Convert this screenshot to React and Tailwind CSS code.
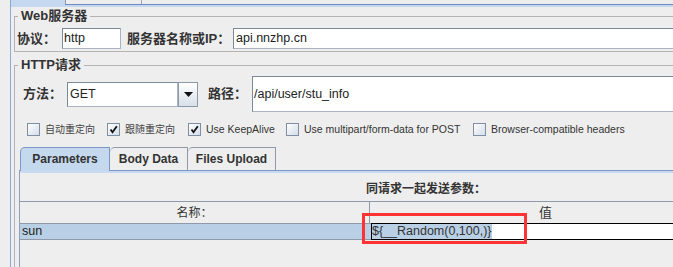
const FONT = "font-['Liberation_Sans','Noto_Sans_CJK_SC',sans-serif]"

function Field({ className = '', children }) {
  return (
    <div
      className={`bg-white border border-t-[#7a8a99] border-l-[#7a8a99] border-b-[#a9b4c0] border-r-[#a9b4c0] text-[12.5px] text-[#222] flex items-center whitespace-nowrap overflow-hidden ${className}`}
    >
      {children}
    </div>
  )
}

function Check({ checked }) {
  return (
    <div className="w-[13px] h-[13px] shrink-0 border border-[#7f8fa3] bg-linear-to-br from-white to-[#d3dde9] flex items-center justify-center">
      {checked && (
        <svg width="9" height="9" viewBox="0 0 9 9">
          <path d="M1.5 4.5 L3.5 7.2 L7.8 1.2" fill="none" stroke="#111" strokeWidth="1.8" />
        </svg>
      )}
    </div>
  )
}

const options = [
  { w: 'w-[80px]', checked: false, label: '自动重定向', cn: true },
  { w: 'w-[81px]', checked: true, label: '跟随重定向', cn: true },
  { w: 'w-[98px]', checked: true, label: 'Use KeepAlive' },
  { w: 'w-[187px]', checked: false, label: 'Use multipart/form-data for POST' },
  { w: 'w-[200px]', checked: false, label: 'Browser-compatible headers' },
]

export default function App() {
  return (
    <div className={`relative w-[673px] h-[267px] overflow-hidden bg-[#eeeeee] text-[#333] ${FONT}`}>
      {/* outer tabbed pane, bottom of the tab row */}
      <div className="flex h-[4px]">
        <div className="w-[10px]" />
        <div className="w-[56px] border-x border-l-[#8fa9d6] border-r-[#8e9aa8] bg-[#c6d8ef]" />
        <div className="w-[76px] border-r border-[#9da8b6]" />
      </div>
      <div className="flex h-[1px]">
        <div className="w-[10px]" />
        <div className="w-[1px] bg-[#8fa9d6]" />
        <div className="w-[54px] bg-[#c6d8ef]" />
        <div className="flex-1 bg-[#6f8ac0]" />
      </div>

      <div className="ml-[10px] w-[760px] h-[262px] border-l border-[#8fa9d6]">
        <div className="h-[2px] bg-[#c6d8ef]" />

        {/* Web服务器 */}
        <fieldset className="mt-[1px] ml-[3px] border border-[#b3b3b3]">
          <legend className="ml-[3px] px-[3px] text-[13px] font-bold leading-[16px] text-[#333]">Web服务器</legend>
          <div className="flex items-center pt-[4px] pb-[2px] pl-[2px]">
            <span className="w-[45px] text-[13px] font-bold">协议：</span>
            <Field className="w-[59px] h-[21px] pl-[1px]">http</Field>
            <span className="ml-[6px] w-[106px] text-[13px] font-bold whitespace-nowrap">服务器名称或IP：</span>
            <Field className="flex-1 h-[21px] pl-[2px]">api.nnzhp.cn</Field>
          </div>
        </fieldset>

        {/* HTTP请求 */}
        <fieldset className="mt-[5px] ml-[3px] border border-[#b3b3b3] h-[260px]">
          <legend className="ml-[3px] px-[3px] text-[13px] font-bold leading-[16px] text-[#333]">HTTP请求</legend>

          <div className="flex items-center pt-[3px] pl-[8px]">
            <span className="w-[44px] text-[13px] font-bold">方法：</span>
            <div className="flex h-[25px]">
              <Field className="w-[111px] h-[25px] pl-[2px]">GET</Field>
              <div className="w-[20px] h-[25px] border border-[#8a9aab] bg-linear-to-b from-white to-[#d8e0e9] flex items-center justify-center">
                <svg width="9" height="5" viewBox="0 0 9 5">
                  <path d="M0 0 H9 L4.5 5 Z" fill="#111" />
                </svg>
              </div>
            </div>
            <span className="ml-[10px] w-[44px] text-[13px] font-bold">路径：</span>
            <Field className="flex-1 h-[36px] pl-[1px]">/api/user/stu_info</Field>
          </div>

          <div className="flex items-center mt-[11px] pl-[12px] h-[13px]">
            {options.map((o) => (
              <div key={o.label} className={`flex items-center gap-[5px] ${o.w}`}>
                <Check checked={o.checked} />
                <span className={`whitespace-nowrap ${o.cn ? 'text-[10px] text-[#444]' : 'text-[10.5px] text-[#333]'}`}>{o.label}</span>
              </div>
            ))}
          </div>

          {/* inner tabs */}
          <div className="mt-[11px] ml-[4px]">
            <div className="flex h-[23px] pl-[1px]">
              <div className="relative z-10 w-[90px] h-[24px] rounded-tl-[5px] border-t border-l border-r border-[#7d97c8] bg-[#c4d8ee] text-[12px] font-bold flex items-center justify-center pb-[2px]">
                Parameters
              </div>
              <div className="w-[78px] rounded-tl-[5px] border-t border-r border-[#8e9aa8] text-[12px] font-bold flex items-center justify-center pb-[1px]">
                Body Data
              </div>
              <div className="w-[88px] rounded-tl-[5px] border-t border-r border-[#8e9aa8] text-[12px] font-bold flex items-center justify-center pb-[1px]">
                Files Upload
              </div>
            </div>
            <div className="border-t border-l border-t-[#7d97c8] border-l-[#8fa0b8]">
              <div className="h-[2px] bg-[#c8daf0]" />
              <div className="pt-[8px] pl-[346px] text-[12px] font-bold leading-[16px] whitespace-nowrap">同请求一起发送参数：</div>

              {/* table */}
              <div className="mt-[4px] w-[701px] h-[80px] border-t border-[#8e9aa8]">
                <div className="flex h-[22px] border-b border-[#8e9aa8]">
                  <div className="w-[350px] border-r border-[#8e9aa8] flex items-center justify-center text-[12px] pt-[1px]">名称：</div>
                  <div className="flex-1 flex items-center justify-center text-[13px] pt-[1px]">值</div>
                </div>
                <div className="flex">
                  <div className="w-[351px] h-[16px] border-b border-[#8e9aa8] bg-[#b8cfe5] pl-[2px] text-[12.5px] leading-[15px] text-[#222]">
                    sun
                  </div>
                  <div className="-mt-px h-[17px] flex-1 border border-black bg-white flex items-center">
                    <span className="bg-[#b8cfe5] text-[12.5px] leading-[15px] text-[#333] whitespace-nowrap">{'${__Random(0,100,)}'}</span>
                  </div>
                </div>
              </div>
            </div>
          </div>
        </fieldset>
      </div>

      {/* annotation box */}
      <div className="absolute left-[362px] top-[213px] w-[165px] h-[31px] border-[3px] border-[#ff3333]" />
    </div>
  )
}
